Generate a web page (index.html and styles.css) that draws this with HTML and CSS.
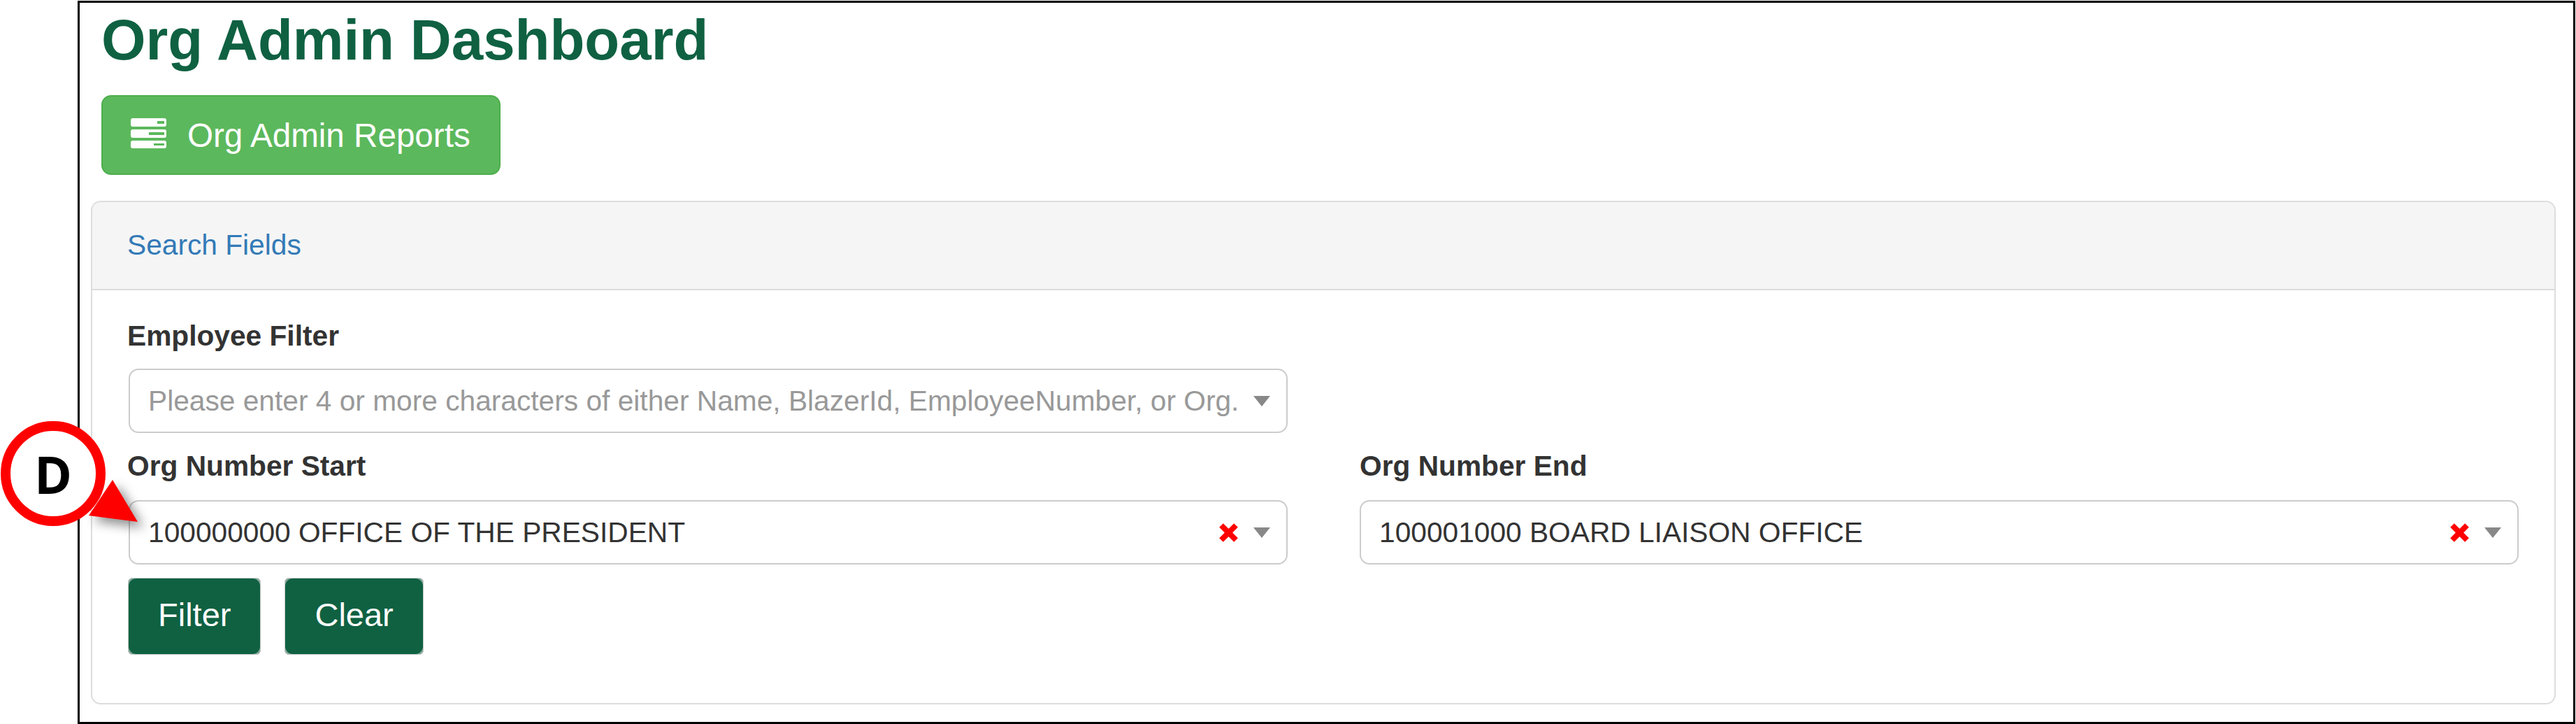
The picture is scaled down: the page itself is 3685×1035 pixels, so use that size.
FILE: index.html
```html
<!DOCTYPE html>
<html lang="en">
<head>
  <meta charset="UTF-8">
  <meta name="viewport" content="width=device-width, initial-scale=1.0">
  <title>Org Admin Dashboard</title>
  <link rel="stylesheet" href="styles.css">
</head>
<body>
  <div class="frame">
    <h1>Org Admin Dashboard</h1>
    <button class="btn-reports">
      <svg class="icon-tasks" width="51" height="43" viewBox="0 0 51 43">
        <path fill-rule="evenodd" fill="#fff" d="M3 0h45a3 3 0 0 1 3 3v6a3 3 0 0 1-3 3H3a3 3 0 0 1-3-3V3a3 3 0 0 1 3-3zM38 4v4h10V4z"/>
        <path fill-rule="evenodd" fill="#fff" d="M3 16h45a3 3 0 0 1 3 3v6a3 3 0 0 1-3 3H3a3 3 0 0 1-3-3v-6a3 3 0 0 1 3-3zM26 20v4h22v-4z"/>
        <path fill-rule="evenodd" fill="#fff" d="M3 32h45a3 3 0 0 1 3 3v5a3 3 0 0 1-3 3H3a3 3 0 0 1-3-3v-5a3 3 0 0 1 3-3zM33 36v3h15v-3z"/>
      </svg>
      Org Admin Reports
    </button>

    <div class="panel">
      <div class="panel-heading">Search Fields</div>
      <div class="panel-body">
        <div class="field">
          <label>Employee Filter</label>
          <div class="row-half">
            <div class="select">
              <span class="select-text placeholder">Please enter 4 or more characters of either Name, BlazerId, EmployeeNumber, or Org.</span>
              <span class="caret"></span>
            </div>
          </div>
        </div>
        <div class="grid-two">
          <div class="field">
            <label>Org Number Start</label>
            <div class="select">
              <span class="select-text">100000000 OFFICE OF THE PRESIDENT</span>
              <svg class="clear-x" width="27" height="27" viewBox="0 0 27 27"><path d="M3 3L24 24M24 3L3 24" stroke="#f00" stroke-width="8"/></svg>
              <span class="caret"></span>
            </div>
          </div>
          <div class="field">
            <label>Org Number End</label>
            <div class="select">
              <span class="select-text">100001000 BOARD LIAISON OFFICE</span>
              <svg class="clear-x" width="27" height="27" viewBox="0 0 27 27"><path d="M3 3L24 24M24 3L3 24" stroke="#f00" stroke-width="8"/></svg>
              <span class="caret"></span>
            </div>
          </div>
        </div>
        <div class="actions">
          <button class="btn-dark"><span>Filter</span></button>
          <button class="btn-dark"><span>Clear</span></button>
        </div>
      </div>
    </div>
  </div>

  <!-- callout drawn over the page -->
  <div class="callout">D</div>
  <svg class="callout-arrow" width="100" height="90" viewBox="0 0 100 90">
    <polygon points="71,6 107,66 37,57" fill="#f00"/>
  </svg>
</body>
</html>
```

FILE: styles.css
```css
* { box-sizing: border-box; }
body { margin: 0; background: #fff; font-family: "Liberation Sans", Arial, sans-serif; font-size: 40.7px; color: #333; }
.frame { width: 3573px; height: 1034px; margin: 1px 0 0 111px; padding-top: 8px; border: 3px solid #000; }
h1 { margin: 0 0 35px 31px; font-size: 81.7px; line-height: 89px; font-weight: bold; color: #0f6142; }

.btn-reports { display: flex; align-items: center; gap: 30px; width: 571px; height: 114px; margin-left: 31px; padding: 0 0 0 40px; background: #5cb85c; border: 2px solid #4cae4c; border-radius: 14px; color: #fff; font-family: inherit; font-size: 47.6px; }
.icon-tasks { margin-top: -6px; }

.panel { margin: 37px 25px 0 16px; height: 720px; border: 2px solid #ddd; border-radius: 14px; }
.panel-heading { height: 126px; padding: 0 0 0 50px; line-height: 122px; background: #f5f5f5; border-bottom: 2px solid #ddd; border-radius: 12px 12px 0 0; color: #337ab7; }
.panel-body { padding: 36px 51px 0 52px; }

label { display: block; margin: 0 0 18px -2px; line-height: 58px; font-weight: bold; }
.grid-two { display: grid; grid-template-columns: 1fr 1fr; column-gap: 103px; margin-top: 18px; }
.grid-two label { margin-bottom: 20px; }
.grid-two .field + .field label { margin-left: 0; }
.row-half { width: 1658px; }

.select { display: flex; align-items: center; height: 92px; padding: 0 23px 0 26px; background: #fff; border: 2px solid #ccc; border-radius: 14px; }
.select-text { flex: 1; white-space: nowrap; }
.placeholder { color: #999; }
.caret { width: 0; height: 0; border-left: 12.5px solid transparent; border-right: 12.5px solid transparent; border-top: 15px solid #888; }
.clear-x { margin-right: 22px; }

.actions { display: flex; gap: 34px; margin-top: 19px; margin-left: -1px; }
/* the corners of the source buttons show a paler green behind the rounded fill */
.btn-dark { height: 110px; padding: 0; background: #84a699; border: 1px solid #c2c8c5; border-radius: 6px; color: #fff; font-family: inherit; font-size: 47px; }
.btn-dark span { display: block; height: 100%; padding: 0 42px 4px; line-height: 104px; background: #0f6142; border-radius: 11px; }

.callout { position: absolute; left: 1px; top: 602px; display: flex; align-items: center; justify-content: center; width: 150px; height: 150px; background: #fff; border: 14px solid #f00; border-radius: 50%; color: #000; font-family: "Open Sans", sans-serif; font-weight: bold; font-size: 73px; }
.callout-arrow { position: absolute; left: 90px; top: 680px; overflow: visible; filter: drop-shadow(8px 8px 8px rgba(0, 0, 0, 0.45)); }
```
